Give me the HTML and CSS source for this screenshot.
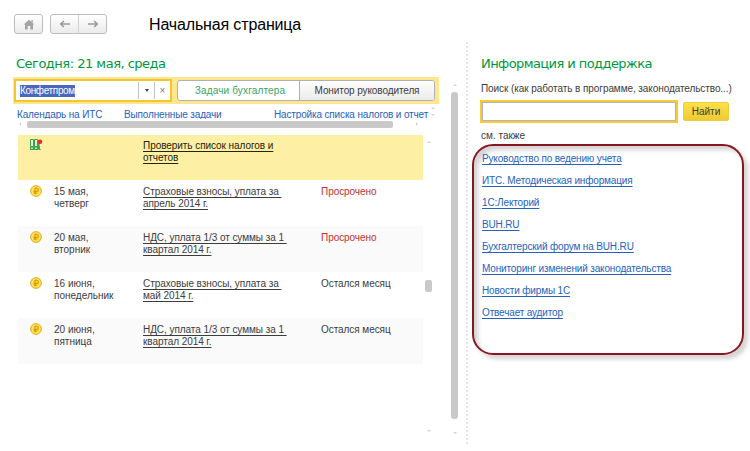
FILE: index.html
```html
<!DOCTYPE html>
<html lang="ru">
<head>
<meta charset="utf-8">
<title>Начальная страница</title>
<link rel="stylesheet" href="styles.css">
</head>
<body>
<svg class="defs" width="0" height="0">
  <symbol id="coin" viewBox="0 0 12 12">
    <circle cx="6" cy="6" r="5.4" fill="#fbd52e" stroke="#e3b02c"/>
    <circle cx="6" cy="6" r="4" fill="none" stroke="#ffeb82" stroke-width=".8"/>
    <path d="M5 9.3V3.2h1.8a1.5 1.5 0 0 1 0 3.3H3.8M3.8 8h3" fill="none" stroke="#d09218" stroke-width="1"/>
  </symbol>
</svg>
<header class="top">
  <div class="btn home"><svg width="12" height="11" viewBox="0 0 12 11"><path d="M6 .8 11.3 5.6H10V10.4H7.3V7H4.7v3.4H2V5.6H.7zM8.5 1h1.3v2.5H8.5z" fill="#a3a3a3"/></svg></div>
  <div class="btn nav">
    <span><svg width="12" height="8" viewBox="0 0 12 8"><path d="M11 4H2M4.8 1 1.8 4l3 3" fill="none" stroke="#999" stroke-width="1.6"/></svg></span>
    <span><svg width="12" height="8" viewBox="0 0 12 8"><path d="M1 4h9M7.2 1l3 3-3 3" fill="none" stroke="#999" stroke-width="1.6"/></svg></span>
  </div>
  <h1>Начальная страница</h1>
</header>
<main>
  <section class="tasks">
    <h2 class="today">Сегодня: 21 мая, среда</h2>
    <div class="bar">
      <div class="combo"><span class="value"><span class="sel">Конфетпром</span></span><span class="cell"><i class="drop"></i></span><span class="cell x">×</span></div>
      <div class="tabs"><span class="on">Задачи бухгалтера</span><span class="off">Монитор руководителя</span></div>
    </div>
    <nav class="links"><a class="l1">Календарь на ИТС</a><a class="l2">Выполненные задачи</a><a class="l3">Настройка списка налогов и отчет</a></nav>
    <div class="hscroll"><i class="tri left"></i><div class="thumb"></div><i class="tri right"></i></div>
    <div class="list">
      <div class="row hot"><span class="ico"><svg width="14" height="13" viewBox="0 0 14 13"><path d="M.5.5h3v7h-3zM4.5.5h3v7h-3z" fill="#e6f5d8" stroke="#3ba34a"/><path d="M0 7.5h10V11H0z" fill="#3ba34a"/><path d="M1.2 9.2h1.6M5.2 9.2h1.6" stroke="#d8f0cf" stroke-width="1.4"/><path d="M8.8 4v5" stroke="#3ba34a" stroke-width="1.6"/><path d="M8 10.5h3" stroke="#999"/><circle cx="10" cy="2.8" r="2.3" fill="#e72b20"/></svg></span><span></span><a>Проверить список налогов и<br>отчетов</a><span></span></div>
      <div class="row"><span class="ico"><svg width="12" height="12"><use href="#coin"/></svg></span><span>15 мая,<br>четверг</span><a>Страховые взносы, уплата за&nbsp;<br>апрель 2014 г.</a><span class="late">Просрочено</span></div>
      <div class="row alt"><span class="ico"><svg width="12" height="12"><use href="#coin"/></svg></span><span>20 мая,<br>вторник</span><a>НДС, уплата 1/3 от суммы за 1&nbsp;<br>квартал 2014 г.</a><span class="late">Просрочено</span></div>
      <div class="row"><span class="ico"><svg width="12" height="12"><use href="#coin"/></svg></span><span>16 июня,<br>понедельник</span><a>Страховые взносы, уплата за&nbsp;<br>май 2014 г.</a><span>Остался месяц</span></div>
      <div class="row alt"><span class="ico"><svg width="12" height="12"><use href="#coin"/></svg></span><span>20 июня,<br>пятница</span><a>НДС, уплата 1/3 от суммы за 1&nbsp;<br>квартал 2014 г.</a><span>Остался месяц</span></div>
    </div>
  </section>
  <div class="inner"><i class="tri up"></i><i class="tri down"></i><i class="tri up second"></i><div class="grip"></div><i class="tri down last"></i></div>
  <div class="vscroll"><i class="tri up"></i><div class="track"></div><i class="tri down"></i></div>
  <svg class="divider" width="2" height="402"><path d="M1 0V402" stroke="#dcdcdc" stroke-width="1.5" stroke-dasharray="2 2"/></svg>
  <aside>
    <h2 class="info">Информация и поддержка</h2>
    <label>Поиск (как работать в программе, законодательство...)</label>
    <div class="search"><div class="field"></div><div class="find">Найти</div></div>
    <div class="also">см. также</div>
    <div class="support"><a>Руководство по ведению учета</a><a>ИТС. Методическая информация</a><a>1С:Лекторий</a><a>BUH.RU</a><a>Бухгалтерский форум на BUH.RU</a><a>Мониторинг изменений законодательства</a><a>Новости фирмы 1С</a><a>Отвечает аудитор</a></div>
  </aside>
</main>
</body>
</html>
```
FILE: styles.css
```css
* { box-sizing: border-box; }
body { margin: 0; width: 750px; height: 451px; overflow: hidden; background: #fff; color: #3c3c3c; font: 10px/12px "Liberation Sans", Arial, sans-serif; letter-spacing: 0; }
.defs { position: absolute; }
.top { display: flex; height: 42px; padding: 14px 0 0 14px; }
.btn { display: flex; height: 20px; border: 1px solid #bdbdbd; border-radius: 3px; background: linear-gradient(#fff, #ebebeb); align-items: center; justify-content: center; }
.home { width: 29px; margin-right: 7px; }
.nav { width: 57px; }
.nav span { flex: 1; height: 18px; display: flex; align-items: center; justify-content: center; }
.nav span + span { border-left: 1px solid #d0d0d0; }
h1 { margin: 1px 0 0 42px; font-size: 16px; line-height: 20px; font-weight: 400; color: #000; letter-spacing: -.15px; white-space: nowrap; }
main { display: flex; height: 409px; }
.tasks { width: 426px; margin-left: 13px; }
h2 { margin: 0; height: 35px; padding-top: 13px; font: 400 13px/18px "DejaVu Sans", Verdana, sans-serif; color: #009640; white-space: nowrap; }
.today { padding-left: 3px; letter-spacing: -.5px; }
.bar { display: flex; height: 27px; background: #fee78f; padding: 2px 0 0 1px; }
.combo { display: flex; width: 158px; height: 23px; border: 2px solid #f5c62c; background: #fff; padding: 1px 0; }
.value { flex: 1; padding: 3px 0 0 4px; letter-spacing: -.35px; line-height: 12px; }
.sel { display: inline-block; background: #4a67bd; color: #fff; height: 12px; }
.cell { width: 16px; border-left: 1px solid #c2c2c2; display: flex; align-items: center; justify-content: center; color: #777; }
.drop { border: 2.5px solid transparent; border-top: 3px solid #444; border-bottom: 0; }
.tabs { display: flex; width: 258px; height: 21px; margin: 1px 0 0 5px; border: 1px solid #aeb0b6; border-radius: 3px; background: #fff; text-align: center; line-height: 20px; overflow: hidden; white-space: nowrap; }
.tabs .on { width: 121px; color: #37a563; padding-left: 3px; letter-spacing: .15px; }
.tabs .off { flex: 1; border-left: 1px solid #aeb0b6; background: linear-gradient(#fefefe, #ebebeb); letter-spacing: -.1px; }
.links { display: flex; height: 15px; padding: 5px 0 0 4px; margin-right: 11px; white-space: nowrap; color: #2562bd; letter-spacing: -.15px; }
.l1, .l2, .l3 { flex: none; height: 10px; overflow: hidden; }
.l1 { width: 107px; }
.l2 { width: 150px; }
.l3 { width: 155px; }
.hscroll { display: flex; height: 10px; padding: 2px 0 0 6px; gap: 6px; }
.hscroll .tri { margin-top: 1px; }
.thumb { width: 366px; height: 7px; background: #c9c9c9; border-radius: 2px; }
.hscroll .right { margin-left: 17px; }
.tri { display: block; width: 0; height: 0; border: 2px solid transparent; }
.up { border-bottom-color: #d4d4d4; border-top: 0; }
.down { border-top-color: #d4d4d4; border-bottom: 0; }
.left { border-right-color: #d4d4d4; border-left: 0; }
.right { border-left-color: #d4d4d4; border-right: 0; }
.list { width: 405px; margin: 6px 0 0 5px; }
.row { display: grid; grid-template-columns: 36px 89px 178px 1fr; height: 46px; padding-top: 6px; align-items: start; white-space: nowrap; }
.row > :last-child, .row > a { letter-spacing: -.06px; }
.hot { height: 45px; padding-top: 5px; background: #fdf0a5; }
.alt { background: #fafafa; }
.ico { padding-left: 12px; height: 14px; margin-top: -1px; }
.ico svg { display: block; }
.row a, .support a { text-decoration: underline; text-underline-offset: 1.6px; text-decoration-thickness: 1px; }
.hot a { color: #25230c; }
.late { color: #bf3030; }
.inner { width: 12px; padding-top: 65px; }
.inner .tri { margin-left: -8px; }
.inner .down { margin-top: 5px; }
.inner .up.second { margin: 25px 0 0 -12px; }
.grip { width: 7px; height: 12px; margin: 137px 0 0 -14px; background: #c9c9c9; border-radius: 2px; }
.inner .down.last { margin: 138px 0 0 -12px; }
.vscroll { width: 7px; padding-top: 42px; }
.vscroll .tri { margin-left: 2px; }
.track { height: 327px; margin-top: 6px; background: #c9c9c9; border-radius: 3px; }
.vscroll .down { margin-top: 13px; }
.divider { margin-left: 8px; flex: none; }
aside { width: 270px; margin-left: 4px; }
.info { padding-left: 9px; letter-spacing: -.57px; }
label { display: block; margin: 6px 0 0 9px; height: 17px; white-space: nowrap; letter-spacing: -.08px; }
.search { display: flex; padding-left: 8px; }
.field { width: 198px; height: 23px; border: 2px solid #fbcb2d; background: #fff; box-shadow: inset 0 0 0 1px #aeb4c6; }
.find { width: 46px; height: 19px; margin: 2px 0 0 5px; border-radius: 2px; background: linear-gradient(#ffe04a, #edcb33); border: 1px solid #edce3d; text-align: center; line-height: 18px; }
.also { margin: 7px 0 0 9px; height: 14px; }
.support { display: flex; flex-direction: column; align-items: flex-start; gap: 10px; width: 272px; height: 211px; padding: 7px 0 0 8px; border: 2px solid #871821; border-radius: 21px; color: #2562bd; white-space: nowrap; letter-spacing: -.15px; box-shadow: 4px 4px 4px #d4d4d4, inset 4px 4px 4px #d4d4d4; }
```
